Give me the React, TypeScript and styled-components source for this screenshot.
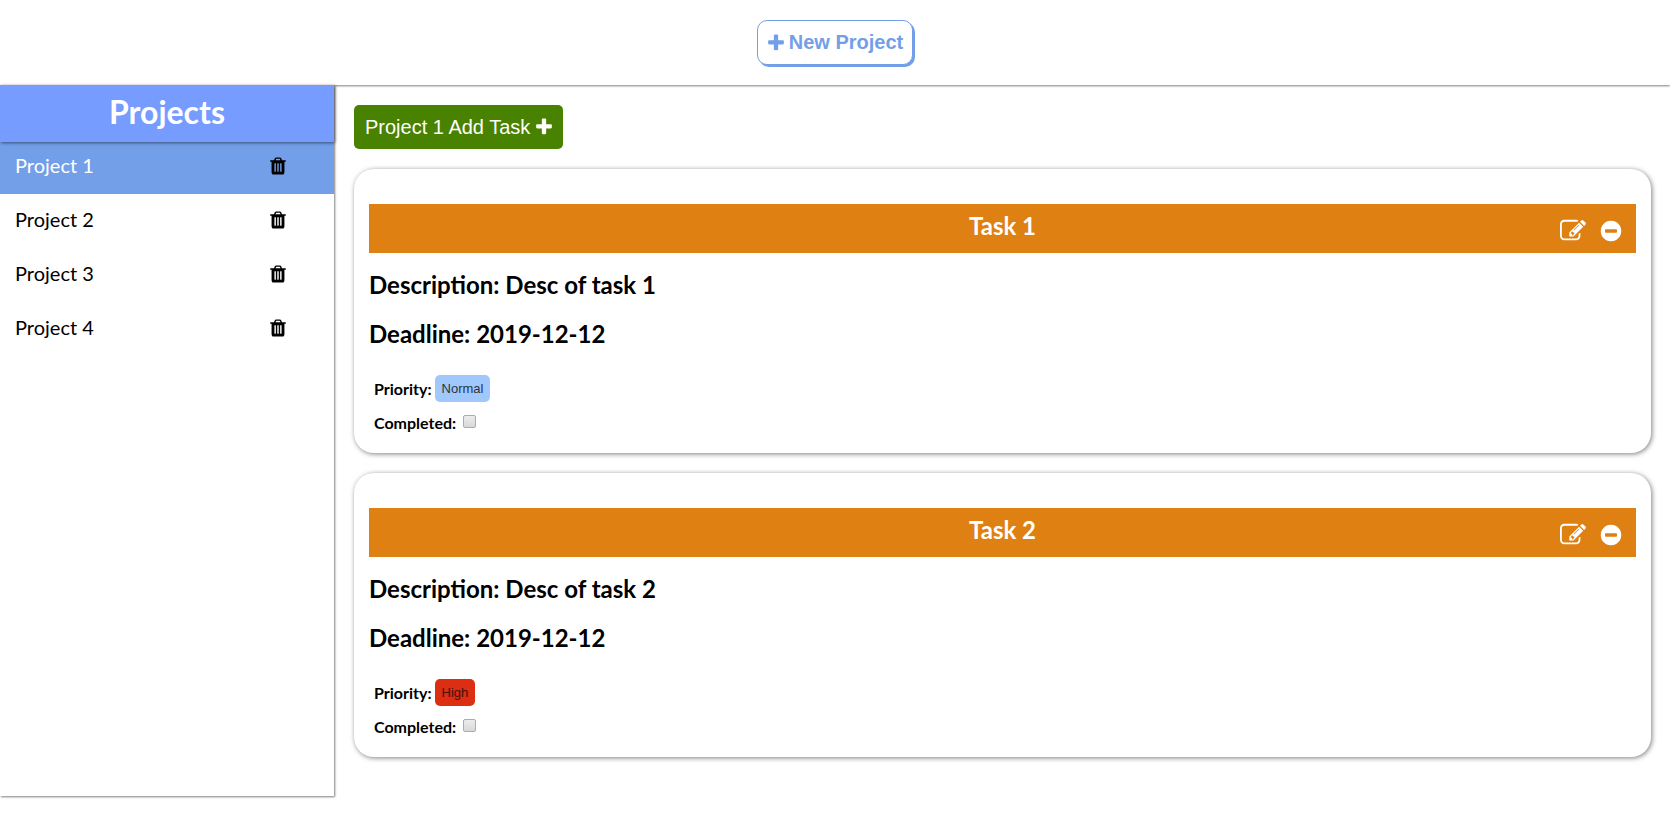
import React, { useState } from "react";
import styled, { createGlobalStyle } from "styled-components";

const GlobalStyle = createGlobalStyle`
  *, *::before, *::after { box-sizing: border-box; }
  body {
    margin: 0;
    background: #fff;
    color: #000;
    font-family: Lato, sans-serif;
  }
  button { font-family: "Liberation Sans", Arial, sans-serif; cursor: pointer; }
`;

const paths = {
  plus: "M1600 736v192q0 40-28 68t-68 28h-416v416q0 40-28 68t-68 28h-192q-40 0-68-28t-28-68v-416h-416q-40 0-68-28t-28-68v-192q0-40 28-68t68-28h416v-416q0-40 28-68t68-28h192q40 0 68 28t28 68v416h416q40 0 68 28t28 68z",
  trash:
    "M704 1376v-704q0-14-9-23t-23-9h-64q-14 0-23 9t-9 23v704q0 14 9 23t23 9h64q14 0 23-9t9-23zm256 0v-704q0-14-9-23t-23-9h-64q-14 0-23 9t-9 23v704q0 14 9 23t23 9h64q14 0 23-9t9-23zm256 0v-704q0-14-9-23t-23-9h-64q-14 0-23 9t-9 23v704q0 14 9 23t23 9h64q14 0 23-9t9-23zm-544-992h448l-48-117q-7-9-17-11h-317q-10 2-17 11zm928 32v64q0 14-9 23t-23 9h-96v948q0 83-47 143.5t-113 60.5h-832q-66 0-113-58.5t-47-141.5v-952h-96q-14 0-23-9t-9-23v-64q0-14 9-23t23-9h309l70-167q15-37 54-63t79-26h320q40 0 79 26t54 63l70 167h309q14 0 23 9t9 23z",
  edit: "M888 1184l116-116-152-152-116 116v56h96v96h56zm440-720q-16-16-33 1l-350 350q-17 17-1 33t33-1l350-350q17-17 1-33zm80 594v190q0 119-84.5 203.5t-203.5 84.5h-832q-119 0-203.5-84.5t-84.5-203.5v-832q0-119 84.5-203.5t203.5-84.5h832q63 0 117 25 15 7 18 23 3 17-9 29l-49 49q-14 14-32 8-23-6-45-6h-832q-66 0-113 47t-47 113v832q0 66 47 113t113 47h832q66 0 113-47t47-113v-126q0-13 9-22l64-64q15-15 35-7t20 29zm-96-738l288 288-672 672h-288v-288zm444 132l-92 92-288-288 92-92q28-28 68-28t68 28l152 152q28 28 28 68t-28 68z",
  minus:
    "M1344 960v-128q0-26-19-45t-45-19h-768q-26 0-45 19t-19 45v128q0 26 19 45t45 19h768q26 0 45-19t19-45zm320-64q0 209-103 385.5t-279.5 279.5-385.5 103-385.5-103-279.5-279.5-103-385.5 103-385.5 279.5-279.5 385.5-103 385.5 103 279.5 279.5 103 385.5z",
};

const Glyph = styled.svg`
  display: block;
  flex: none;
  fill: currentColor;
`;

function Icon({ name, size }: { name: keyof typeof paths; size: number }) {
  return (
    <Glyph width={size} height={size} viewBox="0 0 1792 1792" aria-hidden="true">
      <path d={paths[name]} />
    </Glyph>
  );
}

const Page = styled.div`
  min-height: 100vh;
  display: flex;
  flex-direction: column;
`;

const TopBar = styled.header`
  display: flex;
  justify-content: center;
  padding: 20px 0;
  box-shadow: 0 1px 2px rgba(0, 0, 0, 0.5);
`;

const NewProjectButton = styled.button`
  display: flex;
  align-items: center;
  gap: 3px;
  height: 45px;
  padding: 0 9px 0 8px;
  border: 1px solid #739ee8;
  border-radius: 10px;
  background: #fff;
  box-shadow: 2px 2px 0 #739ee8;
  color: #739ee8;
  font-size: 20px;
  font-weight: bold;
`;

const Columns = styled.div`
  flex: 1;
  display: flex;
  align-items: flex-start;
`;

const Sidebar = styled.nav`
  width: 20%;
  min-height: calc(100vh - 119px);
  background: #fff;
  box-shadow: 1px 1px 2px rgba(0, 0, 0, 0.5);
`;

const SidebarTitle = styled.h1`
  position: relative;
  margin: 0 0 -3px;
  height: 57px;
  background: #769cff;
  box-shadow: 1px 1px 3px rgba(0, 0, 0, 0.5);
  color: #fff;
  font-size: 32px;
  font-weight: bold;
  line-height: 54px;
  text-align: center;
`;

const ProjectList = styled.ul`
  margin: 0;
  padding: 0;
  list-style: none;
`;

const ProjectRow = styled.li<{ $active: boolean }>`
  display: flex;
  align-items: center;
  height: 54px;
  padding: 0 46px 2px 15px;
  background: ${(p) => (p.$active ? "#739ee8" : "transparent")};
  color: ${(p) => (p.$active ? "#fff" : "#000")};

  &:first-child { height: 55px; }
`;

const ProjectName = styled.button`
  flex: 1;
  padding: 0 0 2px;
  border: 0;
  background: none;
  color: inherit;
  font-family: Lato, sans-serif;
  font-size: 20px;
  line-height: 22px;
  text-align: left;
`;

const IconButton = styled.button<{ $color: string }>`
  padding: 0;
  border: 0;
  background: none;
  color: ${(p) => p.$color};
`;

const Main = styled.main`
  flex: 1;
  display: flex;
  flex-direction: column;
  align-items: stretch;
  gap: 20px;
  padding: 20px 19px 20px 20px;
`;

const AddTaskButton = styled.button`
  align-self: flex-start;
  display: flex;
  align-items: center;
  gap: 4px;
  height: 44px;
  padding: 0 9px 0 11px;
  border: 0;
  border-radius: 5px;
  background: #488200;
  color: #fff;
  font-size: 20px;
`;

const Card = styled.article`
  padding: 35px 15px 14px;
  border-radius: 20px;
  background: #fff;
  box-shadow: 1px 1px 5px rgba(0, 0, 0, 0.5);
`;

const CardHeader = styled.header`
  display: grid;
  grid-template-columns: 1fr auto 1fr;
  height: 49px;
  background: #de8012;
  color: #fff;
`;

const CardTitle = styled.h2`
  grid-column: 2;
  margin: 0;
  font-size: 24px;
  font-weight: bold;
  line-height: 44px;
`;

const CardActions = styled.div`
  display: flex;
  align-items: center;
  justify-content: flex-end;
  gap: 13px;
  padding: 4px 13px 0 0;
`;

const Detail = styled.h2`
  margin: 0;
  padding-bottom: 20px;
  font-size: 24px;
  font-weight: bold;
  line-height: 29px;
`;

const Details = styled.div`
  padding: 17px 0 3px;
`;

const Field = styled.div`
  display: flex;
  align-items: center;
  gap: 3px;
  height: 34px;
  padding-left: 5px;
  font-size: 16px;
  font-weight: bold;
`;

const Badge = styled.button<{ $high: boolean }>`
  height: 27px;
  padding: 0 7px;
  border: 0;
  border-radius: 5px;
  background: ${(p) => (p.$high ? "#dc2e12" : "#a0c8fc")};
  color: ${(p) => (p.$high ? "#45100a" : "#2a3442")};
  font-size: 13px;
`;

const Checkbox = styled.input`
  appearance: none;
  width: 13px;
  height: 13px;
  margin: 0 0 2px 4px;
  border: 1px solid #acacac;
  border-radius: 2px;
  background: linear-gradient(#ececec, #d8d8d8);

  &:checked { background: #739ee8; }
`;

const projects = ["Project 1", "Project 2", "Project 3", "Project 4"];
const tasks = [
  { id: 1, title: "Task 1", description: "Desc of task 1", deadline: "2019-12-12", priority: "Normal" },
  { id: 2, title: "Task 2", description: "Desc of task 2", deadline: "2019-12-12", priority: "High" },
];

type Task = (typeof tasks)[number];

function TaskCard({ task }: { task: Task }) {
  const checkboxId = `completed-${task.id}`;
  return (
    <Card>
      <CardHeader>
        <CardTitle>{task.title}</CardTitle>
        <CardActions>
          <IconButton $color="#fff" aria-label={`Edit ${task.title}`}>
            <Icon name="edit" size={26} />
          </IconButton>
          <IconButton $color="#fff" aria-label={`Remove ${task.title}`}>
            <Icon name="minus" size={24} />
          </IconButton>
        </CardActions>
      </CardHeader>
      <Details>
        <Detail>Description: {task.description}</Detail>
        <Detail>Deadline: {task.deadline}</Detail>
      </Details>
      <Field>
        <span>Priority:</span>
        <Badge $high={task.priority === "High"}>{task.priority}</Badge>
      </Field>
      <Field>
        <label htmlFor={checkboxId}>Completed:</label>
        <Checkbox type="checkbox" id={checkboxId} />
      </Field>
    </Card>
  );
}

export default function App() {
  const [active, setActive] = useState(projects[0]);
  return (
    <Page>
      <GlobalStyle />
      <TopBar>
        <NewProjectButton>
          <Icon name="plus" size={20} />
          New Project
        </NewProjectButton>
      </TopBar>
      <Columns>
        <Sidebar>
          <SidebarTitle>Projects</SidebarTitle>
          <ProjectList>
            {projects.map((name) => (
              <ProjectRow key={name} $active={name === active}>
                <ProjectName onClick={() => setActive(name)}>{name}</ProjectName>
                <IconButton $color="#000" aria-label={`Delete ${name}`}>
                  <Icon name="trash" size={20} />
                </IconButton>
              </ProjectRow>
            ))}
          </ProjectList>
        </Sidebar>
        <Main>
          <AddTaskButton>
            {active} Add Task
            <Icon name="plus" size={20} />
          </AddTaskButton>
          {tasks.map((task) => (
            <TaskCard key={task.id} task={task} />
          ))}
        </Main>
      </Columns>
    </Page>
  );
}
